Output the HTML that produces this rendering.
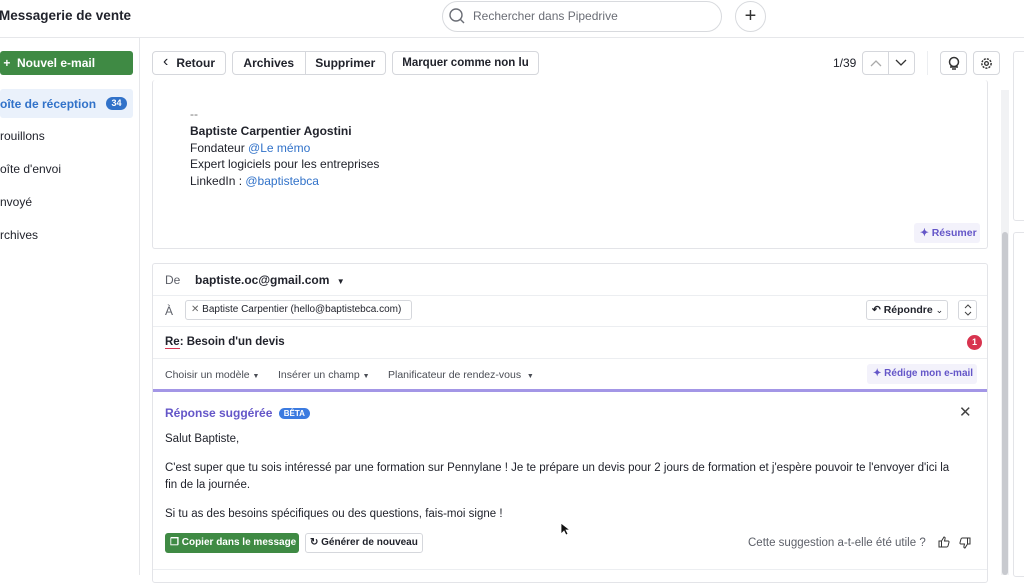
<!DOCTYPE html>
<html><head><meta charset="utf-8"><style>
*{box-sizing:border-box;margin:0;padding:0}
body{width:1024px;height:575px;overflow:hidden;background:#fff;font-family:"Liberation Sans",sans-serif;color:#21232c;position:relative;font-size:12px}
.abs{position:absolute;white-space:nowrap}
.btn{position:absolute;border:1px solid #d5d7dc;border-radius:4px;background:#fff;font-weight:bold;font-size:12px;display:flex;align-items:center;justify-content:center;color:#21232c;white-space:nowrap}
.nav{position:absolute;left:0;font-size:12px;color:#21232c}
.card{position:absolute;border:1px solid #e3e4e8;border-radius:3px;background:#fff}
.row{position:absolute;left:0;right:0;border-bottom:1px solid #eceef1}
.gray{color:#5d6069}
.link{color:#3172c9}
</style></head><body>
<div class="abs" style="left:0;top:0;width:1024px;height:38px;border-bottom:1px solid #e6e7ea"></div>
<div class="abs" style="left:-1px;top:8px;font-size:13.5px;font-weight:bold">Messagerie de vente</div>
<div class="abs" style="left:442px;top:1px;width:280px;height:31px;border:1px solid #d8dade;border-radius:16px"></div>
<svg class="abs" style="left:448px;top:7px" width="18" height="18" viewBox="0 0 18 18"><circle cx="8" cy="8" r="6" fill="none" stroke="#6a6d75" stroke-width="1.4"/><path d="M12.5 12.5L16 16" stroke="#6a6d75" stroke-width="1.4"/></svg>
<div class="abs gray" style="left:473px;top:9px;font-size:12px;color:#6a6d75">Rechercher dans Pipedrive</div>
<div class="abs" style="left:735px;top:1px;width:31px;height:31px;border:1px solid #d8dade;border-radius:50%;font-size:20px;text-align:center;line-height:28px;color:#333">+</div>
<div class="abs" style="left:139px;top:38px;width:1px;height:537px;background:#e6e7ea"></div>
<div class="abs" style="left:0;top:51px;width:133px;height:24px;background:#3f8a44;border-radius:3px;color:#fff;font-weight:bold;font-size:12px;line-height:24px">&nbsp;+ &nbsp;Nouvel e-mail</div>
<div class="abs" style="left:0;top:89px;width:133px;height:29px;background:#eaf1fb;border-radius:3px"></div>
<div class="nav" style="top:97px;font-weight:bold;color:#3172c9">oîte de réception</div>
<div class="abs" style="left:106px;top:97px;width:21px;height:13px;border-radius:7px;background:#3172c9;color:#fff;font-size:9px;font-weight:bold;text-align:center;line-height:13px">34</div>
<div class="nav" style="top:129px">rouillons</div>
<div class="nav" style="top:162px">oîte d'envoi</div>
<div class="nav" style="top:195px">nvoyé</div>
<div class="nav" style="top:228px">rchives</div>
<div class="btn" style="left:152px;top:51px;width:74px;height:24px"><span style="font-weight:normal;font-size:16px;margin-right:8px;margin-top:-2px">&#8249;</span>Retour</div>
<div class="btn" style="left:232px;top:51px;width:154px;height:24px;justify-content:flex-start"><span style="width:72px;text-align:center">Archives</span><span style="width:1px;height:22px;background:#d5d7dc"></span><span style="width:80px;text-align:center">Supprimer</span></div>
<div class="btn" style="left:392px;top:51px;width:147px;height:24px;font-size:11.5px">Marquer comme non lu</div>
<div class="abs" style="left:833px;top:56px;font-size:12px">1/39</div>
<div class="btn" style="left:862px;top:51px;width:53px;height:24px;justify-content:flex-start">
<span style="width:26px;display:flex;justify-content:center"><svg width="12" height="8" viewBox="0 0 12 8"><path d="M1 7l5-5 5 5" fill="none" stroke="#aaa" stroke-width="1.3"/></svg></span><span style="width:1px;height:22px;background:#d5d7dc"></span><span style="width:26px;display:flex;justify-content:center"><svg width="12" height="8" viewBox="0 0 12 8"><path d="M1 1l5 5 5-5" fill="none" stroke="#333" stroke-width="1.3"/></svg></span></div>
<div class="abs" style="left:927px;top:51px;width:1px;height:24px;background:#eceef1"></div>
<div class="btn" style="left:940px;top:51px;width:27px;height:24px"><svg width="14" height="14" viewBox="0 0 14 14"><circle cx="7" cy="6" r="4.5" fill="none" stroke="#333" stroke-width="1.5"/><path d="M3 11h8M5 13h4" stroke="#333" stroke-width="1.4"/></svg></div>
<div class="btn" style="left:973px;top:51px;width:27px;height:24px"><svg width="13" height="13" viewBox="0 0 14 14"><circle cx="7" cy="7" r="2" fill="none" stroke="#333" stroke-width="1.4"/><circle cx="7" cy="7" r="5" fill="none" stroke="#333" stroke-width="1.6" stroke-dasharray="2.2 1.2"/></svg></div>
<div class="abs" style="left:1013px;top:51px;width:14px;height:170px;border:1px solid #e3e4e8;border-radius:3px"></div>
<div class="abs" style="left:1013px;top:232px;width:14px;height:345px;border:1px solid #e3e4e8;border-radius:3px"></div>
<div class="abs" style="left:1001px;top:90px;width:8px;height:485px;background:#f1f2f4"></div>
<div class="abs" style="left:1002px;top:232px;width:6px;height:343px;background:#c8cacf;border-radius:3px"></div>
<div class="card" style="left:152px;top:80px;width:836px;height:169px;border-top:none">
 <div class="abs" style="left:37px;top:27px;color:#777">--</div>
 <div class="abs" style="left:37px;top:43px;font-weight:bold;line-height:16.5px">Baptiste Carpentier Agostini</div>
 <div class="abs" style="left:37px;top:59.5px;line-height:16.5px">Fondateur <span class="link">@Le mémo</span><br>Expert logiciels pour les entreprises<br>LinkedIn : <span class="link">@baptistebca</span></div>
 <div class="abs" style="left:761px;top:143px;width:66px;height:20px;background:#f3f2fb;border-radius:3px;color:#6456c8;font-weight:bold;font-size:10.5px;line-height:20px;padding-left:6px">&#10022; Résumer</div>
</div>
<div class="card" style="left:152px;top:263px;width:836px;height:320px">
 <div class="row" style="top:0;height:32px"><span class="abs gray" style="left:12px;top:9px">De</span><span class="abs" style="left:42px;top:9px;font-weight:bold">baptiste.oc@gmail.com <span style="font-size:8px;margin-left:4px">&#9660;</span></span></div>
 <div class="row" style="top:32px;height:31px"><span class="abs gray" style="left:12px;top:8px">À</span>
  <div class="abs" style="left:32px;top:4px;width:227px;height:20px;border:1px solid #d5d7dc;border-radius:3px;font-size:10px;line-height:18px;padding-left:5px;overflow:hidden"><span style="color:#666">&#10005;</span> Baptiste Carpentier (hello@baptistebca.com)</div>
  <div class="abs" style="left:713px;top:4px;width:82px;height:20px;border:1px solid #d5d7dc;border-radius:3px;font-size:10.5px;font-weight:bold;line-height:18px;padding-left:5px;overflow:hidden">&#8630; Répondre <span style="font-weight:normal;font-size:9px">&#8964;</span></div>
  <div class="abs" style="left:805px;top:4px;width:19px;height:20px;border:1px solid #d5d7dc;border-radius:3px;display:flex;align-items:center;justify-content:center"><svg width="8" height="12" viewBox="0 0 8 12"><path d="M1 4l3-3 3 3M1 8l3 3 3-3" fill="none" stroke="#444" stroke-width="1"/></svg></div>
 </div>
 <div class="row" style="top:63px;height:32px"><span class="abs" style="left:12px;top:9px;font-weight:bold;font-size:11.5px"><span style="border-bottom:1.5px solid #d8344f">Re</span>: Besoin d'un devis</span>
  <div class="abs" style="left:814px;top:8px;width:15px;height:15px;border-radius:50%;background:#d8344f;color:#fff;font-size:9px;text-align:center;line-height:15px;font-weight:bold">1</div></div>
 <div class="row" style="top:95px;height:33px;border-bottom:3px solid #a396e6;font-size:10.5px">
  <span class="abs" style="left:12px;top:10px;color:#4a4d55">Choisir un modèle <span style="font-size:7px">&#9660;</span></span>
  <span class="abs" style="left:125px;top:10px;color:#4a4d55">Insérer un champ <span style="font-size:7px">&#9660;</span></span>
  <span class="abs" style="left:235px;top:10px;color:#4a4d55">Planificateur de rendez-vous &nbsp;<span style="font-size:7px">&#9660;</span></span>
  <div class="abs" style="left:714px;top:5px;width:110px;height:20px;background:#f3f2fb;border-radius:3px;color:#6456c8;font-weight:bold;font-size:10px;line-height:20px;padding-left:6px;overflow:hidden">&#10022; Rédige mon e-mail</div>
 </div>
 <div class="abs" style="left:12px;top:142px;color:#6456c8;font-weight:bold">Réponse suggérée <span style="display:inline-block;background:#3c7be0;color:#fff;font-size:8px;border-radius:7px;padding:1px 5px;vertical-align:1px;margin-left:3px">BÊTA</span></div>
 <div class="abs" style="left:806px;top:139px;font-size:15px;color:#444">&#10005;</div>
 <div class="abs" style="left:12px;top:167px;font-size:11.5px;line-height:17px;width:790px;white-space:normal">Salut Baptiste,<div style="margin-top:12px">C'est super que tu sois intéressé par une formation sur Pennylane ! Je te prépare un devis pour 2 jours de formation et j'espère pouvoir te l'envoyer d'ici la fin de la journée.</div><div style="margin-top:12px">Si tu as des besoins spécifiques ou des questions, fais-moi signe !</div></div>
 <div class="abs" style="left:12px;top:269px;width:134px;height:20px;background:#3f8a44;border-radius:3px;color:#fff;font-weight:bold;font-size:10px;line-height:20px;padding-left:5px;overflow:hidden">&#10064; Copier dans le message</div>
 <div class="abs" style="left:152px;top:269px;width:118px;height:20px;border:1px solid #d5d7dc;border-radius:3px;font-weight:bold;font-size:10px;line-height:18px;padding-left:4px;overflow:hidden">&#8635; Générer de nouveau</div>
 <div class="abs gray" style="left:595px;top:273px;font-size:11.5px">Cette suggestion a-t-elle été utile ?</div>
 <svg class="abs" style="left:785px;top:272px" width="12" height="12" viewBox="0 0 12 12"><path d="M1 5h2.5v6H1zM3.5 5l2.5-4c1 0 1.3.7 1 2L6.5 5H10c.8 0 1.2.6 1 1.3l-1 3.7c-.2.6-.6 1-1.2 1H3.5" fill="none" stroke="#333" stroke-width="1"/></svg>
 <svg class="abs" style="left:806px;top:273px" width="12" height="12" viewBox="0 0 12 12" transform="rotate(180)"><path d="M1 5h2.5v6H1zM3.5 5l2.5-4c1 0 1.3.7 1 2L6.5 5H10c.8 0 1.2.6 1 1.3l-1 3.7c-.2.6-.6 1-1.2 1H3.5" fill="none" stroke="#333" stroke-width="1"/></svg>
 <div class="row" style="top:305px;height:1px"></div>
</div>
<svg class="abs" style="left:560px;top:522px" width="10" height="14" viewBox="0 0 10 14"><path d="M1 1v11l3-3 2 4 2-1-2-4h4z" fill="#111" stroke="#fff" stroke-width=".8"/></svg>
</body></html>
